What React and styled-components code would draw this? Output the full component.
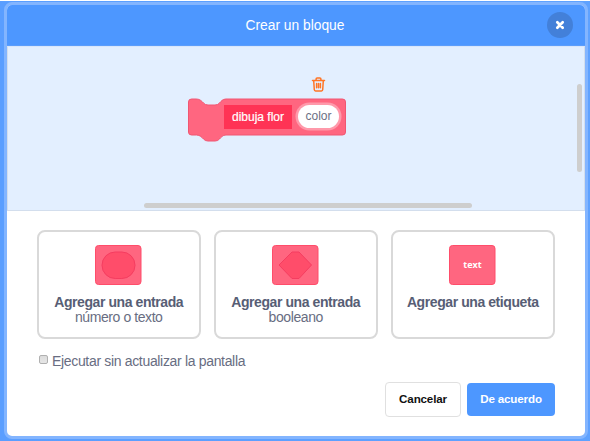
import React from 'react';
import styled, { createGlobalStyle } from 'styled-components';

const GlobalStyle = createGlobalStyle`
  * { box-sizing: border-box; }
  body { margin: 0; overflow: hidden; background: #fff; font-family: "Liberation Sans", Arial, sans-serif; }
`;

const Backdrop = styled.div`
  width: 590px;
  height: 441px;
  padding: 1px 2px 2px 4px;
  border-top: 1px solid #fff;
  background: linear-gradient(90deg, #5a9eff, #5fa2ff);
`;

const Modal = styled.section`
  display: flex;
  flex-direction: column;
  width: 584px;
  height: 437px;
  border: 3px solid #83b5ff;
  border-radius: 8px;
  background: #fff;
  overflow: hidden;
`;

const Header = styled.header`
  display: grid;
  grid-template-columns: 1fr auto 1fr;
  align-items: center;
  height: 41px;
  flex: none;
  padding-right: 12px;
  background: #4d97ff;
  border-bottom: 1px solid #5b9dfb;
`;

const Title = styled.h1`
  grid-column: 2;
  margin: 0;
  padding: 1px 0 0 10px;
  color: #fff;
  font-size: 13.8px;
  font-weight: 400;
  line-height: 18px;
  white-space: nowrap;
`;

const CloseButton = styled.button`
  display: grid;
  place-items: center;
  justify-self: end;
  width: 26px;
  height: 26px;
  padding: 0;
  border: 0;
  border-radius: 50%;
  background: #4380d9;
`;

const Workspace = styled.div`
  position: relative;
  flex: none;
  height: 165px;
  background: #e3efff;
  border: 1px solid #d3deed;
  border-top-color: #d9e6fa;
`;

const TrashIcon = styled.svg`
  position: absolute;
  left: 303px;
  top: 30px;
`;

const Block = styled.div`
  position: absolute;
  left: 180px;
  top: 52px;
  display: flex;
  gap: 5px;
  width: 159px;
  height: 43px;
  padding: 6px 0 0 36px;
`;

const BlockShape = styled.svg`
  position: absolute;
  left: 0;
  top: 0;
  overflow: visible;
`;

const BlockLabel = styled.span`
  position: relative;
  width: 68px;
  height: 24px;
  background: #ff3355;
  color: #fff;
  font-size: 12px;
  line-height: 25px;
  text-align: center;
  white-space: nowrap;
  -webkit-text-stroke: 0.2px #fff;
`;

const BlockField = styled.span`
  position: relative;
  width: 41px;
  height: 23px;
  margin-left: 1px;
  border-radius: 12px;
  background: #fff;
  box-shadow: 0 0 0 2.5px #ff99aa;
  color: #6b7084;
  font-size: 12px;
  line-height: 22px;
  text-align: center;
`;

const Scrollbar = styled.div`
  position: absolute;
  border-radius: 3px;
  background: #cecece;
  ${({ $vertical }) => ($vertical
    ? 'right: 2px; top: 37px; width: 5px; height: 88px;'
    : 'left: 136px; bottom: 2px; width: 328px; height: 5px;')}
`;

const Body = styled.div`
  flex: 1;
  padding: 19px 30px 0;
`;

const Options = styled.div`
  display: grid;
  grid-template-columns: repeat(3, 163.5px);
  gap: 13.5px;
`;

const OptionCard = styled.button`
  display: flex;
  flex-direction: column;
  align-items: center;
  height: 109px;
  padding: 13px 0 0;
  border: 2px solid #d9d9d9;
  border-radius: 8px;
  background: #fff;
  color: #575e75;
  font: 14px/15px "Liberation Sans", Arial, sans-serif;
  letter-spacing: -0.42px;
  white-space: nowrap;
`;

const OptionTitle = styled.strong`
  margin-top: 10px;
`;

const OptionHint = styled.span`
  color: #686d82;
`;

const RefreshOption = styled.label`
  display: flex;
  align-items: center;
  gap: 4px;
  height: 18px;
  margin: 13px 0 0 2px;
  color: #686d82;
  font-size: 14px;
  letter-spacing: -0.33px;
  line-height: 18px;
`;

const Checkbox = styled.input`
  appearance: none;
  width: 9px;
  height: 9px;
  margin: 0 0 3px;
  border: 1px solid #b0b0b0;
  border-radius: 2px;
  background: linear-gradient(#dcdcdc, #e6e6e6);
`;

const Actions = styled.div`
  display: flex;
  justify-content: flex-end;
  align-items: center;
  gap: 6px;
  margin-top: 12px;
`;

const ActionButton = styled.button`
  width: ${({ $primary }) => ($primary ? '88px' : '76px')};
  height: ${({ $primary }) => ($primary ? '33px' : '35px')};
  padding: 0 0 2px;
  border: ${({ $primary }) => ($primary ? '0' : '1px solid #e0e0e0')};
  border-radius: 4px;
  background: ${({ $primary }) => ($primary ? '#4d97ff' : '#fff')};
  color: ${({ $primary }) => ($primary ? '#fff' : '#111')};
  font: bold 11.6px "Liberation Sans", Arial, sans-serif;
  letter-spacing: -0.15px;
`;

function InputIcon({ kind }) {
  return (
    <svg width="47" height="40" viewBox="0 0 47 40">
      <rect x="0.5" y="0.5" width="45.5" height="39" rx="3" fill="#ff6680" stroke="#ff4d6a" />
      {kind === 'text' && (
        <rect x="7" y="7" width="33" height="26.5" rx="13.2" fill="#ff4d6a" stroke="#f53d60" />
      )}
      {kind === 'boolean' && (
        <path d="M20 7H27L39.5 20L27 33.5H20L7 20Z" fill="#ff4d6a" stroke="#f53d60" strokeLinejoin="round" />
      )}
      {kind === 'label' && (
        <text x="23.5" y="23" fill="#fff" textAnchor="middle" fontFamily="Open Sans, sans-serif" fontSize="9" fontWeight="700" letterSpacing="0">text</text>
      )}
    </svg>
  );
}

const options = [
  { kind: 'text', title: 'Agregar una entrada', hint: 'número o texto' },
  { kind: 'boolean', title: 'Agregar una entrada', hint: 'booleano' },
  { kind: 'label', title: 'Agregar una etiqueta' },
];

export default function App() {
  return (
    <>
      <GlobalStyle />
      <Backdrop>
        <Modal>
          <Header>
            <Title>Crear un bloque</Title>
            <CloseButton aria-label="Cerrar">
              <svg width="10" height="10" viewBox="0 0 10 10">
                <path d="M2.3 2.3L7.7 7.7M7.7 2.3L2.3 7.7" stroke="#fff" strokeWidth="2.7" strokeLinecap="round" />
              </svg>
            </CloseButton>
          </Header>
          <Workspace>
            <TrashIcon width="15" height="16" viewBox="0 0 15 16" fill="none" stroke="#ff7526" strokeWidth="1.5" strokeLinecap="round" strokeLinejoin="round">
              <path d="M1.5 3.5H13.5M5.1 3.3V2.1Q5.1 1 6.1 1H8.9Q9.9 1 9.9 2.1V3.3M2.7 3.8L3.3 12.8Q3.4 13.9 4.5 13.9H10.5Q11.6 13.9 11.7 12.8L12.3 3.8M5.6 6.5V10.8M7.5 6.5V10.8M9.4 6.5V10.8" />
            </TrashIcon>
            <Block>
              <BlockShape width="159" height="43" viewBox="0 0 159 43">
                <path d="M.5 3Q.5 0 3.5 0H8.5C12 0 14 2.5 15.5 4Q17 6 20 6H27Q30 6 31.5 4C33 2.5 34.5 0 38 0H154.5Q157.5 0 157.5 3V33Q157.5 36 154.5 36H38C34.5 36 33 38.5 31.5 40Q30 42 27 42H20Q17 42 15.5 40C14 38.5 12 36 8.5 36H3.5Q.5 36 .5 33Z" fill="#ff6680" stroke="#f05672" />
              </BlockShape>
              <BlockLabel>dibuja flor</BlockLabel>
              <BlockField>color</BlockField>
            </Block>
            <Scrollbar $vertical />
            <Scrollbar />
          </Workspace>
          <Body>
            <Options>
              {options.map(({ kind, title, hint }) => (
                <OptionCard key={kind}>
                  <InputIcon kind={kind} />
                  <OptionTitle>{title}</OptionTitle>
                  {hint && <OptionHint>{hint}</OptionHint>}
                </OptionCard>
              ))}
            </Options>
            <RefreshOption>
              <Checkbox type="checkbox" />
              Ejecutar sin actualizar la pantalla
            </RefreshOption>
            <Actions>
              <ActionButton>Cancelar</ActionButton>
              <ActionButton $primary>De acuerdo</ActionButton>
            </Actions>
          </Body>
        </Modal>
      </Backdrop>
    </>
  );
}
